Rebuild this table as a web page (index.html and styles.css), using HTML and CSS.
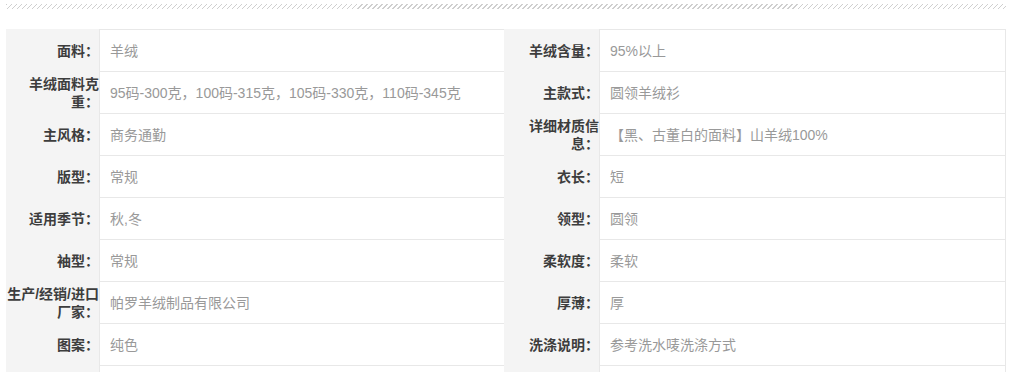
FILE: index.html
```html
<!DOCTYPE html>
<html lang="zh-CN">
<head>
<meta charset="utf-8">
<title>产品参数</title>
<link rel="stylesheet" href="styles.css">
</head>
<body>
<div class="hatch"></div>
<div class="specs">
  <div class="lbl first">面料：</div><div class="val first">羊绒</div>
  <div class="lbl first">羊绒含量：</div><div class="val first end">95%以上</div>

  <div class="lbl">羊绒面料克重：</div><div class="val">95码-300克，100码-315克，105码-330克，110码-345克</div>
  <div class="lbl">主款式：</div><div class="val end">圆领羊绒衫</div>

  <div class="lbl">主风格：</div><div class="val">商务通勤</div>
  <div class="lbl">详细材质信息：</div><div class="val end">【黑、古董白的面料】山羊绒100%</div>

  <div class="lbl">版型：</div><div class="val">常规</div>
  <div class="lbl">衣长：</div><div class="val end">短</div>

  <div class="lbl">适用季节：</div><div class="val">秋,冬</div>
  <div class="lbl">领型：</div><div class="val end">圆领</div>

  <div class="lbl">袖型：</div><div class="val">常规</div>
  <div class="lbl">柔软度：</div><div class="val end">柔软</div>

  <div class="lbl">生产/经销/进口厂家：</div><div class="val">帕罗羊绒制品有限公司</div>
  <div class="lbl">厚薄：</div><div class="val end">厚</div>

  <div class="lbl">图案：</div><div class="val">纯色</div>
  <div class="lbl">洗涤说明：</div><div class="val end">参考洗水唛洗涤方式</div>

  <div class="lbl"></div><div class="val"></div>
  <div class="lbl"></div><div class="val end"></div>
</div>
</body>
</html>
```

FILE: styles.css
```css
html, body {
  margin: 0;
  padding: 0;
  background: #ffffff;
}

body {
  font-family: "Liberation Sans", "Noto Sans CJK SC", sans-serif;
  font-size: 14px;
}

.hatch {
  width: 1000px;
  height: 5px;
  margin: 4px 0 0 6px;
  background: repeating-linear-gradient(135deg, #cfcfcf 0 1.1px, transparent 1.1px 3.54px);
}

.specs {
  display: grid;
  grid-template-columns: 93px 405px 95px 407px;
  width: 1000px;
  margin: 20px 0 0 6px;
}

.lbl {
  background: #f4f4f4;
  color: #3d3d3d;
  font-weight: bold;
  line-height: 18px;
  text-align: right;
  display: flex;
  align-items: center;
  justify-content: flex-end;
}

.val {
  box-sizing: border-box;
  min-height: 42px;
  border-left: 1px solid #e8e8e8;
  border-bottom: 1px solid #e8e8e8;
  padding-left: 10px;
  color: #999999;
  line-height: 18px;
  display: flex;
  align-items: center;
}

.val.first {
  min-height: 43px;
  border-top: 1px solid #e8e8e8;
}

.val.end {
  border-right: 1px solid #e8e8e8;
}
```
